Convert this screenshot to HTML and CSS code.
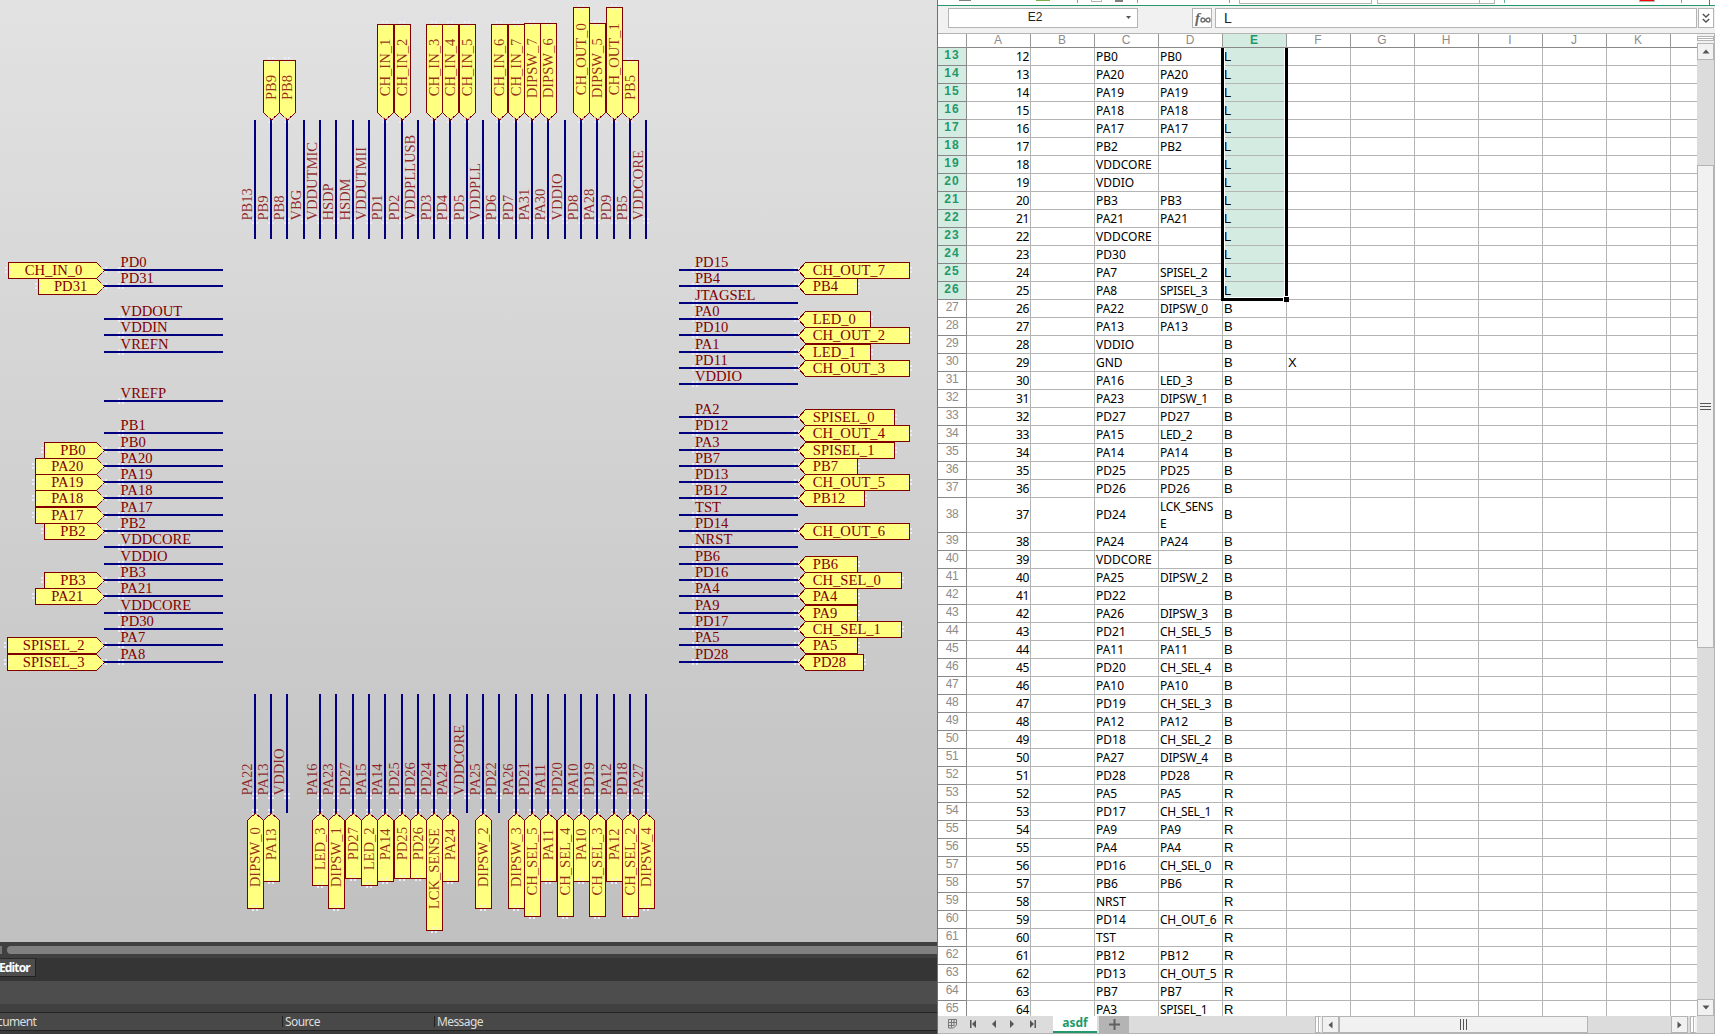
FILE: index.html
```html
<!DOCTYPE html>
<html lang="en">
<head>
<meta charset="utf-8">
<title>Schematic symbol and pin list</title>
<link rel="stylesheet" href="styles.css">
</head>
<body>
<div class="desktop">
  <section class="editor">
    <svg class="canvas" id="canvas" width="937" height="942" viewBox="0 0 937 942"></svg>
    <div class="hscroll"><span class="hscroll-end"></span><span class="hscroll-thumb"></span></div>
    <div class="panel-tabs"><span class="panel-tab">Editor</span></div>
    <div class="panel-tools"></div>
    <div class="panel-gap"></div>
    <div class="messages-head">
      <span class="mh mh-doc">cument</span>
      <span class="mh mh-src">Source</span>
      <span class="mh mh-msg">Message</span>
    </div>
    <div class="messages-body"></div>
  </section>

  <section class="sheet">
    <svg class="ribbon" width="777" height="5" viewBox="938 0 777 5" shape-rendering="crispEdges">
      <path fill="#808080" d="M959 0h12v1h-12zM1115 0h8v2h-8z"/>
      <path fill="#7cb04c" d="M1036 0h14v1h-14z"/>
      <path fill="#b4b4b4" d="M1091 0h1v2h-1zM1101 0h1v2h-1zM1091 1h10v1h-10zM1239 0h1v4h-1zM1371 0h1v4h-1zM1239 3h133v1h-133zM1377 0h1v4h-1zM1479 0h1v4h-1zM1494 0h1v4h-1zM1377 3h118v1h-118z"/>
      <path fill="#5fb797" d="M1077 0h1v3h-1zM1137 0h1v3h-1zM1229 0h1v3h-1zM1504 0h1v3h-1zM1681 0h1v3h-1z"/>
      <path fill="#23996b" d="M1709 0h1v5h-1z"/>
      <path fill="#b4b4b4" d="M1639 0h16v2h-16z"/>
      <path fill="#ff0000" d="M1640 0h14v1h-14z"/>
    </svg>
    <div class="formula-bar">
      <div class="name-box"><span>E2</span><svg width="7" height="4" viewBox="0 0 7 4"><path fill="#555" d="M1 0h5L3.500 3z"/></svg></div>
      <div class="fx"><span class="fx-f">f</span><svg width="11" height="8" viewBox="0 0 11 8"><path d="M5.500 4C4 1.500 1.200 1 1 4s3 2.500 4.500 0S9.800 1 10 4s-3 2.500-4.500 0z" fill="none" stroke="#707070" stroke-width="1.500"/></svg></div>
      <div class="formula">L</div>
      <div class="expand"><svg width="8" height="10" viewBox="0 0 8 10"><path d="M.8 1l3.200 3 3.200-3M.8 6L4 9l3.200-3" fill="none" stroke="#555" stroke-width="1.500"/></svg></div>
    </div>
    <div class="grid-area">
      <div class="grid-clip">
        <div class="grid" id="grid"></div>
        <div class="selection"><i class="fill-handle"></i></div>
      </div>
      <div class="vscroll">
        <span class="split-box"></span>
        <span class="arrow-btn"><svg width="8" height="5" viewBox="0 0 8 5"><path fill="#555" d="M4 .5L7.500 4.500h-7z"/></svg></span>
        <span class="vtrack"><span class="vthumb"><i></i><i></i><i></i></span></span>
        <span class="arrow-btn"><svg width="8" height="5" viewBox="0 0 8 5"><path fill="#555" d="M.5.500h7L4 4.500z"/></svg></span>
      </div>
    </div>
    <div class="sheet-bar">
      <div class="sheet-nav">
        <svg width="115" height="17" viewBox="0 0 115 17">
          <path d="M10.500 3.500h8v5.500l-3 3h-5zM10.500 6.500h8M10.500 9.500h6M13.500 3.500v8M16 3.500v6" fill="none" stroke="#777"/>
          <path fill="#555" d="M32 4h1.500v8H32zM38 4v8l-4-4zM58 4v8l-4-4zM72 4v8l4-4zM92 4v8l4-4zM96.500 4H98v8h-1.500z"/>
        </svg>
      </div>
      <div class="sheet-tab">asdf</div>
      <div class="sheet-add"><svg width="11" height="11" viewBox="0 0 11 11"><path fill="#606060" d="M4.500 0h2v4.500H11v2H6.500V11h-2V6.500H0v-2h4.500z"/></svg></div>
      <div class="sheet-space"></div>
      <div class="splitter"></div>
      <div class="sbtn"><svg width="5" height="8" viewBox="0 0 5 8"><path fill="#555" d="M4.500.500v7L.5 4z"/></svg></div>
      <div class="hthumb"><i></i><i></i><i></i></div>
      <div class="htrack"></div>
      <div class="sbtn"><svg width="5" height="8" viewBox="0 0 5 8"><path fill="#555" d="M.5.500v7L4.500 4z"/></svg></div>
      <div class="splitter last"></div>
      <div class="corner"></div>
    </div>
  </section>
</div>
<script src="app.js"></script>
</body>
</html>
```
FILE: styles.css
```css
* { box-sizing: border-box; }
body { margin: 0; overflow: hidden; background: #fff; }
.desktop { display: flex; width: 1715px; height: 1034px; }

/* schematic editor */
.editor { width: 937px; display: flex; flex-direction: column; background: #353535; font-family: "Noto Sans", "Open Sans", sans-serif; font-size: 12px; overflow: hidden; }
.canvas { display: block; flex: none; background: linear-gradient(#e2e2e2, #c0c0c0); }
.wire { fill: #000080; }
.port { fill: #ffff80; stroke: #800000; stroke-width: 1; }
.handle { fill: #ebebfa; }
.net { font-family: "Liberation Serif", "Times New Roman", serif; font-size: 14.6px; fill: #800000; }
.net.up { fill-opacity: 0.82; }
.hscroll { height: 16px; flex: none; background: #404040; display: flex; align-items: flex-start; padding-top: 4px; gap: 5px; }
.hscroll-end { width: 2px; height: 8px; background: #777; }
.hscroll-thumb { flex: 1; height: 8px; background: #808080; border-radius: 4px 0 0 4px; }
.panel-tabs { height: 23px; flex: none; background: #353535; display: flex; align-items: flex-start; }
.panel-tab { width: 36px; height: 19px; border: 1px solid #222; border-left: 0; border-top-color: #2a2a2a; background: #4d4d4d; color: #fff; font-weight: bold; line-height: 17px; letter-spacing: -0.85px; text-indent: -1px; }
.panel-tools { height: 23px; flex: none; background: #4d4d4d; }
.panel-gap { height: 8px; flex: none; background: #404040; }
.messages-head { height: 19px; flex: none; background: #484848; border-top: 1px solid #222; border-bottom: 1px solid #222; display: flex; align-items: center; color: #dedede; letter-spacing: -0.6px; }
.mh { height: 11px; line-height: 11px; }
.mh-doc { width: 282px; text-indent: -3px; }
.mh-src { width: 152px; border-left: 1px solid #222; padding-left: 2px; }
.mh-msg { border-left: 1px solid #222; padding-left: 2px; }
.messages-body { flex: 1; background: #3a3a3a; }

/* spreadsheet */
.sheet { width: 778px; border-left: 1px solid #23996b; display: flex; flex-direction: column; background: #f1f1f1; }
.ribbon { display: block; flex: none; background: #fff; }
.formula-bar { height: 29px; flex: none; border-top: 1px solid #23996b; border-bottom: 1px solid #b4b4b4; display: flex; padding: 2px 1px 5px 10px; font-family: "Liberation Sans", Arial, sans-serif; font-size: 12px; color: #222; }
.name-box { width: 190px; height: 20px; border: 1px solid #b4b4b4; background: #fff; display: flex; align-items: center; justify-content: flex-end; padding-right: 5px; }
.name-box span { flex: 1; text-align: center; padding-right: 4px; line-height: 17px; height: 18px; }
.fx { width: 20px; height: 20px; margin-left: 54px; border: 1px solid #b4b4b4; background: #fff; display: flex; align-items: center; color: #666; }
.fx-f { font: italic bold 15px "Liberation Serif", serif; width: 7px; padding-left: 2px; }
.fx svg { margin-top: 4px; }
.formula { flex: 1; height: 20px; margin-left: 3px; border: 1px solid #b4b4b4; background: #fff; line-height: 18px; padding-left: 8px; font-size: 14px; }
.expand { width: 16px; height: 20px; border: 1px solid #b4b4b4; background: #fff; margin-left: 1px; display: flex; align-items: center; justify-content: center; }
.grid-area { height: 982px; flex: none; display: flex; }
.grid-clip { width: 759px; height: 982px; overflow: hidden; position: relative; background: #fff; }
.grid { display: grid; grid-template-columns: 29px repeat(12, 64px); width: 797px; }
.col-head, .row-head { font-family: "Liberation Sans", Arial, sans-serif; color: #8c8c8c; text-align: center; background: #fff; border-right: 1px solid #888; border-bottom: 1px solid #888; }
.col-head { height: 14px; font-size: 12px; line-height: 12px; border-right-color: #999; padding-right: 1px; }
.col-head.on, .row-head.on { background: #d4ebe1; color: #23996b; font-weight: bold; }
.row-head { font-size: 12px; letter-spacing: -0.5px; line-height: 15px; display: flex; align-items: center; justify-content: center; padding-bottom: 2px; }
.row-head.on { letter-spacing: 1px; }
.cell { height: 18px; border-right: 1px solid #b4b4b4; border-bottom: 1px solid #b4b4b4; font-family: "Noto Sans", "Open Sans", sans-serif; font-size: 12px; line-height: 17px; color: #000; padding-left: 1px; white-space: nowrap; }
.cell.num { text-align: right; padding-right: 1px; letter-spacing: -0.4px; }
.cell.tight { letter-spacing: -0.3px; }
.cell.side { font-family: "Liberation Sans", Arial, sans-serif; font-size: 13px; }
.cell.on { background: #d4ebe1; }
.cell.tall, .row-head.tall { height: 35px; line-height: 34px; }
.cell.tall.wrap { line-height: 17px; white-space: normal; word-break: break-all; padding-right: 4px; }
/* the range border lies over the cells of column E */
.selection { position: absolute; left: 283px; top: 14px; width: 67px; height: 253px; border: 3px solid #000; border-top: 0; box-shadow: inset 1px 0 #fff, inset -1px -1px #fff; }
.fill-handle { position: absolute; right: -4px; bottom: -4px; width: 6px; height: 6px; background: #000; border: 1px solid #fff; border-width: 1px 0 0 1px; }
.vscroll { width: 18px; height: 982px; background: #f1f1f1; display: flex; flex-direction: column; border-right: 1px solid #b4b4b4; }
.split-box { height: 5px; margin: 2px 0; border: 1px solid #b4b4b4; background: linear-gradient(#fff 1px, #b4b4b4 1px, #b4b4b4 2px, #fff 2px); }
.arrow-btn { height: 17px; border: 1px solid #b4b4b4; background: #f1f1f1; display: flex; align-items: center; justify-content: center; flex: none; }
.vtrack { flex: 1; background: #dcdcdc; padding-top: 105px; display: block; }
.vthumb { height: 483px; border: 1px solid #b4b4b4; background: #f1f1f1; display: flex; flex-direction: column; align-items: center; justify-content: center; gap: 2px; }
.vthumb i { width: 11px; height: 1px; background: #555; }
.sheet-bar { flex: 1; display: flex; background: #dcdcdc; border-bottom: 1px solid #b4b4b4; }
.sheet-nav { width: 115px; }
.sheet-nav svg { display: block; }
.sheet-tab { width: 44px; background: #fff; border-bottom: 2px solid #23996b; color: #23996b; font: bold 12px/14px "Noto Sans", "Open Sans", sans-serif; text-align: center; }
.sheet-add { width: 30px; margin-left: 2px; background: #b4b4b4; display: flex; align-items: center; justify-content: center; }
.sheet-space { width: 184px; }
.splitter { width: 7px; border: 1px solid #b4b4b4; border-right: 2px solid #f1f1f1; background: linear-gradient(90deg, #fff 2px, #b4b4b4 2px, #b4b4b4 3px, #fff 3px); margin-left: 2px; }
.sbtn { width: 17px; border: 1px solid #b4b4b4; background: #f1f1f1; display: flex; align-items: center; justify-content: center; }
.hthumb { width: 249px; border: 1px solid #b4b4b4; background: #f1f1f1; display: flex; gap: 2px; align-items: center; justify-content: center; }
.hthumb i { width: 1px; height: 11px; background: #555; }
.htrack { width: 83px; background: #dcdcdc; }
.corner { flex: 1; border-right: 1px solid #b4b4b4; }
```
FILE: app.js
```js
// Pin centre positions along each side of the symbol
const rows = [270,286,303,319,335,352,368,384,401,417,433,450,466,482,498,515,531,547,564,580,596,613,629,645,662];
const cols = [255,271,287,304,320,336,353,369,385,402,418,434,450,467,483,499,516,532,548,565,581,597,614,630,646];

// Each entry is "slot pin" or "slot pin port"
const parse = s => s.split(',').map(t => t.trim().split(' '));
const left = parse('0 PD0 CH_IN_0,1 PD31 PD31,3 VDDOUT,4 VDDIN,5 VREFN,8 VREFP,10 PB1,11 PB0 PB0,12 PA20 PA20,13 PA19 PA19,14 PA18 PA18,15 PA17 PA17,16 PB2 PB2,17 VDDCORE,18 VDDIO,19 PB3 PB3,20 PA21 PA21,21 VDDCORE,22 PD30,23 PA7 SPISEL_2,24 PA8 SPISEL_3');
const right = parse('0 PD15 CH_OUT_7,1 PB4 PB4,2 JTAGSEL,3 PA0 LED_0,4 PD10 CH_OUT_2,5 PA1 LED_1,6 PD11 CH_OUT_3,7 VDDIO,9 PA2 SPISEL_0,10 PD12 CH_OUT_4,11 PA3 SPISEL_1,12 PB7 PB7,13 PD13 CH_OUT_5,14 PB12 PB12,15 TST,16 PD14 CH_OUT_6,17 NRST,18 PB6 PB6,19 PD16 CH_SEL_0,20 PA4 PA4,21 PA9 PA9,22 PD17 CH_SEL_1,23 PA5 PA5,24 PD28 PD28');
const top_ = parse('0 PB13,1 PB9 PB9,2 PB8 PB8,3 VBG,4 VDDUTMIC,5 HSDP,6 HSDM,7 VDDUTMII,8 PD1 CH_IN_1,9 PD2 CH_IN_2,10 VDDPLLUSB,11 PD3 CH_IN_3,12 PD4 CH_IN_4,13 PD5 CH_IN_5,14 VDDPLL,15 PD6 CH_IN_6,16 PD7 CH_IN_7,17 PA31 DIPSW_7,18 PA30 DIPSW_6,19 VDDIO,20 PD8 CH_OUT_0,21 PA28 DIPSW_5,22 PD9 CH_OUT_1,23 PB5 PB5,24 VDDCORE');
const bottom = parse('0 PA22 DIPSW_0,1 PA13 PA13,2 VDDIO,4 PA16 LED_3,5 PA23 DIPSW_1,6 PD27 PD27,7 PA15 LED_2,8 PA14 PA14,9 PD25 PD25,10 PD26 PD26,11 PD24 LCK_SENSE,12 PA24 PA24,13 VDDCORE,14 PA25 DIPSW_2,15 PD22,16 PA26 DIPSW_3,17 PD21 CH_SEL_5,18 PA11 PA11,19 PD20 CH_SEL_4,20 PA10 PA10,21 PD19 CH_SEL_3,22 PA12 PA12,23 PD18 CH_SEL_2,24 PA27 DIPSW_4');

// Far edge of a port and, where it varies, the start of its text
const pick = (name, table) => table.find(([re]) => re.test(name)).slice(1);
const leftPorts = [[/^CH_IN/, 8.5, 24.8], [/^PD/, 38.5, 54], [/^PB/, 44.5, 60.3], [/^PA/, 35.5, 51.3], [/^SPI/, 7.5, 22.8]];
const rightPorts = [[/^CH_OUT/, 909.5], [/^CH_SEL/, 901.5], [/^LED/, 870.5], [/^SPI/, 894.5], [/^PB12/, 864.5], [/^PD28/, 863.5], [/^P/, 857.5]];
const topPorts = [[/^CH_IN/, 24.5, 96.3], [/^CH_OUT/, 7.5, 95.3], [/^DIPSW/, 23.5, 98.3], [/^P/, 60.5, 100]];
const bottomPorts = [[/^DIPSW/, 908.5, 887.2], [/^CH_SEL/, 916.5, 895.5], [/^LED/, 885.5, 870.3], [/^LCK/, 930.5, 909.2], [/^PD/, 878.5, 860.3], [/^PA/, 881.5, 860.3]];

const wires = [], ports = [], labels = [], handles = [];
const wire = (x, y, w, h) => wires.push(`<rect class="wire" x="${x}" y="${y}" width="${w}" height="${h}"/>`);
const port = pts => ports.push(`<polygon class="port" points="${pts}"/>`);
const text = (x, y, s, up) => labels.push(`<text class="net${up ? ' up' : ''}" ${up ? `transform="translate(${x} ${y}) rotate(-90)"` : `x="${x}" y="${y}"`}>${s}</text>`);
const handle = (x, y) => handles.push(`<path class="handle" d="M${x - 3} ${y - 3}h2v2h-2zM${x + 1} ${y - 3}h2v2h-2zM${x - 3} ${y + 1}h2v2h-2zM${x + 1} ${y + 1}h2v2h-2z"/>`);

for (const [k, name, net] of left) {
  const y = rows[k];
  wire(104, y - 1, 118.6, 2); text(120.6, y - 3.4, name); handle(121, y);
  if (net) {
    const [x, tx] = pick(net, leftPorts);
    port(`${x},${y - 7.5} 96.500,${y - 7.5} 104.500,${y + .5} 96.500,${y + 8.5} ${x},${y + 8.5}`);
    text(tx, y + 4.7, net); handle(Math.floor(x), y); handle(104, y);
  }
}
for (const [k, name, net] of right) {
  const y = rows[k];
  wire(679.4, y - 1, 118.6, 2); text(695, y - 3.4, name); handle(695, y);
  if (net) {
    const [x] = pick(net, rightPorts);
    port(`${x},${y - 7.5} 805.500,${y - 7.5} 798.500,${y + .5} 805.500,${y + 8.5} ${x},${y + 8.5}`);
    text(812.8, y + 4.7, net); handle(Math.floor(x), y); handle(797, y);
  }
}
for (const [k, name, net] of top_) {
  const x = cols[k];
  wire(x - 1, 120, 2, 119); text(x - 3, 220.6, name, true); handle(x, 221);
  if (net) {
    const [y, ty] = pick(net, topPorts);
    port(`${x - 7.5},${y} ${x + 8.5},${y} ${x + 8.5},112.500 ${x + .5},120 ${x - 7.5},112.500`);
    text(x + 5, ty, net, true); handle(x, Math.floor(y)); handle(x, 120);
  }
}
for (const [k, name, net] of bottom) {
  const x = cols[k];
  wire(x - 1, 694, 2, 119); text(x - 3, 795.4, name, true); handle(x, 796);
  if (net) {
    const [y, ty] = pick(net, bottomPorts);
    port(`${x - 7.5},${y} ${x + 8.5},${y} ${x + 8.5},820.500 ${x + .5},813 ${x - 7.5},820.500`);
    text(x + 5, ty, net, true); handle(x, Math.floor(y)); handle(x, 812);
  }
}
document.getElementById('canvas').innerHTML =
  `<g shape-rendering="crispEdges">${handles.join('')}${wires.join('')}${ports.join('')}<g opacity=".7">${handles.join('')}</g></g>${labels.join('')}`;

// Sheet rows 13 to 65: C column, D column, side
const data = ('PB0 PB0 L,PA20 PA20 L,PA19 PA19 L,PA18 PA18 L,PA17 PA17 L,PB2 PB2 L,VDDCORE - L,VDDIO - L,PB3 PB3 L,PA21 PA21 L,VDDCORE - L,PD30 - L,PA7 SPISEL_2 L,PA8 SPISEL_3 L,' +
  'PA22 DIPSW_0 B,PA13 PA13 B,VDDIO - B,GND - B X,PA16 LED_3 B,PA23 DIPSW_1 B,PD27 PD27 B,PA15 LED_2 B,PA14 PA14 B,PD25 PD25 B,PD26 PD26 B,PD24 LCK_SENSE B,PA24 PA24 B,VDDCORE - B,PA25 DIPSW_2 B,PD22 - B,PA26 DIPSW_3 B,PD21 CH_SEL_5 B,PA11 PA11 B,PD20 CH_SEL_4 B,PA10 PA10 B,PD19 CH_SEL_3 B,PA12 PA12 B,PD18 CH_SEL_2 B,PA27 DIPSW_4 B,' +
  'PD28 PD28 R,PA5 PA5 R,PD17 CH_SEL_1 R,PA9 PA9 R,PA4 PA4 R,PD16 CH_SEL_0 R,PB6 PB6 R,NRST - R,PD14 CH_OUT_6 R,TST - R,PB12 PB12 R,PD13 CH_OUT_5 R,PB7 PB7 R,PA3 SPISEL_1 R').split(',');
let html = '<div class="col-head"></div>' + [...'ABCDEFGHIJK', ''].map(c => `<div class="col-head${c === 'E' ? ' on' : ''}">${c}</div>`).join('');
data.forEach((row, i) => {
  const n = i + 13;
  const [c, d, side, f = ''] = row.split(' ');
  const tall = n === 38 ? ' tall' : '';
  const on = n <= 26 ? ' on' : '';
  const cell = (t, cls = '') => `<div class="cell${tall}${cls}">${t}</div>`;
  html += `<div class="row-head${on}${tall}">${n}</div>` + cell(n - 1, ' num') + cell('') + cell(c) +
    cell(d === '-' ? '' : d, (tall ? ' wrap' : '') + (d.includes('_') ? ' tight' : '')) +
    cell(side, ' side' + on) + cell(f, ' side') + cell('').repeat(6);
});
document.getElementById('grid').innerHTML = html;
```
